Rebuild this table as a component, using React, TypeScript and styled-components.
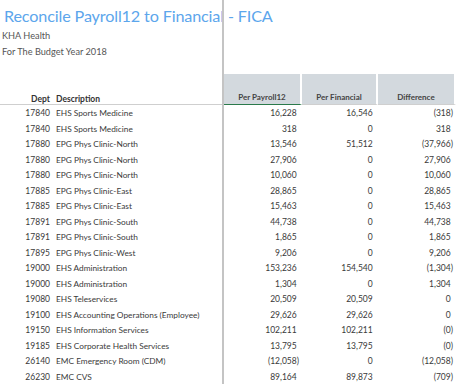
import styled, { createGlobalStyle } from 'styled-components';

const GlobalStyle = createGlobalStyle`
  html, body {
    margin: 0;
    padding: 0;
    background: #fff;
  }
  body {
    font-family: Lato, "Open Sans", sans-serif;
    color: #3a3a3a;
  }
`;

interface Row {
  dept: string;
  desc: string;
  payroll: string;
  financial: string;
  diff: string;
}

const rows: Row[] = [
  { dept: '17840', desc: 'EHS Sports Medicine', payroll: '16,228', financial: '16,546', diff: '(318)' },
  { dept: '17840', desc: 'EHS Sports Medicine', payroll: '318', financial: '0', diff: '318' },
  { dept: '17880', desc: 'EPG Phys Clinic-North', payroll: '13,546', financial: '51,512', diff: '(37,966)' },
  { dept: '17880', desc: 'EPG Phys Clinic-North', payroll: '27,906', financial: '0', diff: '27,906' },
  { dept: '17880', desc: 'EPG Phys Clinic-North', payroll: '10,060', financial: '0', diff: '10,060' },
  { dept: '17885', desc: 'EPG Phys Clinic-East', payroll: '28,865', financial: '0', diff: '28,865' },
  { dept: '17885', desc: 'EPG Phys Clinic-East', payroll: '15,463', financial: '0', diff: '15,463' },
  { dept: '17891', desc: 'EPG Phys Clinic-South', payroll: '44,738', financial: '0', diff: '44,738' },
  { dept: '17891', desc: 'EPG Phys Clinic-South', payroll: '1,865', financial: '0', diff: '1,865' },
  { dept: '17895', desc: 'EPG Phys Clinic-West', payroll: '9,206', financial: '0', diff: '9,206' },
  { dept: '19000', desc: 'EHS Administration', payroll: '153,236', financial: '154,540', diff: '(1,304)' },
  { dept: '19000', desc: 'EHS Administration', payroll: '1,304', financial: '0', diff: '1,304' },
  { dept: '19080', desc: 'EHS Teleservices', payroll: '20,509', financial: '20,509', diff: '0' },
  { dept: '19100', desc: 'EHS Accounting Operations (Employee)', payroll: '29,626', financial: '29,626', diff: '0' },
  { dept: '19150', desc: 'EHS Information Services', payroll: '102,211', financial: '102,211', diff: '(0)' },
  { dept: '19185', desc: 'EHS Corporate Health Services', payroll: '13,795', financial: '13,795', diff: '(0)' },
  { dept: '26140', desc: 'EMC Emergency Room (CDM)', payroll: '(12,058)', financial: '0', diff: '(12,058)' },
  { dept: '26230', desc: 'EMC CVS', payroll: '89,164', financial: '89,873', diff: '(709)' },
];

const Sheet = styled.div`
  position: relative;
  height: 384px;
  overflow: hidden;
`;

// frozen-pane divider, drawn over the title
const FreezeLine = styled.div`
  position: absolute;
  top: 0;
  bottom: 0;
  left: 222px;
  width: 2px;
  background: #c4c4c4;
`;

const Heading = styled.div`
  padding: 4px 0 0 4px;
`;

const Title = styled.h1`
  margin: 0;
  font-size: 16.2px;
  line-height: 24px;
  font-weight: 400;
  letter-spacing: -0.15px;
  color: #5ca6ec;
  white-space: nowrap;
`;

const SubLine = styled.div`
  font-size: 9.2px;
  line-height: 16px;
  color: #555;
  margin-left: -2px;
`;

const Grid = styled.div`
  display: grid;
  grid-template-columns: 52px 170px 2px 78px 76px 78px;
  margin-top: 14px;
`;

const LeftHead = styled.div<{ $align: 'left' | 'right' }>`
  height: 31px;
  box-sizing: border-box;
  display: flex;
  align-items: flex-end;
  justify-content: ${p => (p.$align === 'right' ? 'flex-end' : 'flex-start')};
  padding: ${p => (p.$align === 'right' ? '0 2px 0 0' : '0 0 0 4px')};
  font-size: 8.5px;
  font-weight: 700;
  color: #333;
  border-bottom: 1px solid #cfcfcf;
`;

const Gap = styled.div`
  border-bottom: 1px solid #cfcfcf;
`;

const ShadedHead = styled.div<{ $active?: boolean }>`
  height: 31px;
  box-sizing: border-box;
  display: flex;
  align-items: flex-end;
  justify-content: center;
  padding-bottom: 2px;
  background: #d3d9de;
  background-clip: padding-box;
  border-right: 2px solid #fff;
  border-bottom: 1px solid ${p => (p.$active ? '#2b7a4b' : '#cfcfcf')};
  font-size: 8px;
  font-weight: 700;
  color: #444;
`;

const Cell = styled.div`
  height: 15.5px;
  box-sizing: border-box;
  padding-top: 1px;
  display: flex;
  align-items: center;
  font-size: 8.5px;
  color: #3a3a3a;
  white-space: nowrap;
`;

const DeptCell = styled(Cell)`
  justify-content: flex-end;
  padding-right: 2px;
`;

const DescCell = styled(Cell)`
  padding-left: 4px;
  font-size: 8.3px;
`;

const NumCell = styled(Cell)`
  justify-content: flex-end;
  padding-right: 3px;
`;

const Paren = styled.span`
  visibility: hidden;
`;

const Amount = ({ value }: { value: string }) => (
  <NumCell>
    {value}
    {!value.startsWith('(') && <Paren>)</Paren>}
  </NumCell>
);

export default function App() {
  return (
    <>
      <GlobalStyle />
      <Sheet>
        <Heading>
          <Title>Reconcile Payroll12 to Financial - FICA</Title>
          <SubLine>KHA Health</SubLine>
          <SubLine>For The Budget Year 2018</SubLine>
        </Heading>
        <Grid>
          <LeftHead $align="right">Dept</LeftHead>
          <LeftHead $align="left">Description</LeftHead>
          <Gap />
          <ShadedHead $active>Per Payroll12</ShadedHead>
          <ShadedHead>Per Financial</ShadedHead>
          <ShadedHead>Difference</ShadedHead>
          {rows.map((r, i) => (
            <div key={i} style={{ display: 'contents' }}>
              <DeptCell>{r.dept}</DeptCell>
              <DescCell>{r.desc}</DescCell>
              <div />
              <Amount value={r.payroll} />
              <Amount value={r.financial} />
              <Amount value={r.diff} />
            </div>
          ))}
        </Grid>
        <FreezeLine />
      </Sheet>
    </>
  );
}
